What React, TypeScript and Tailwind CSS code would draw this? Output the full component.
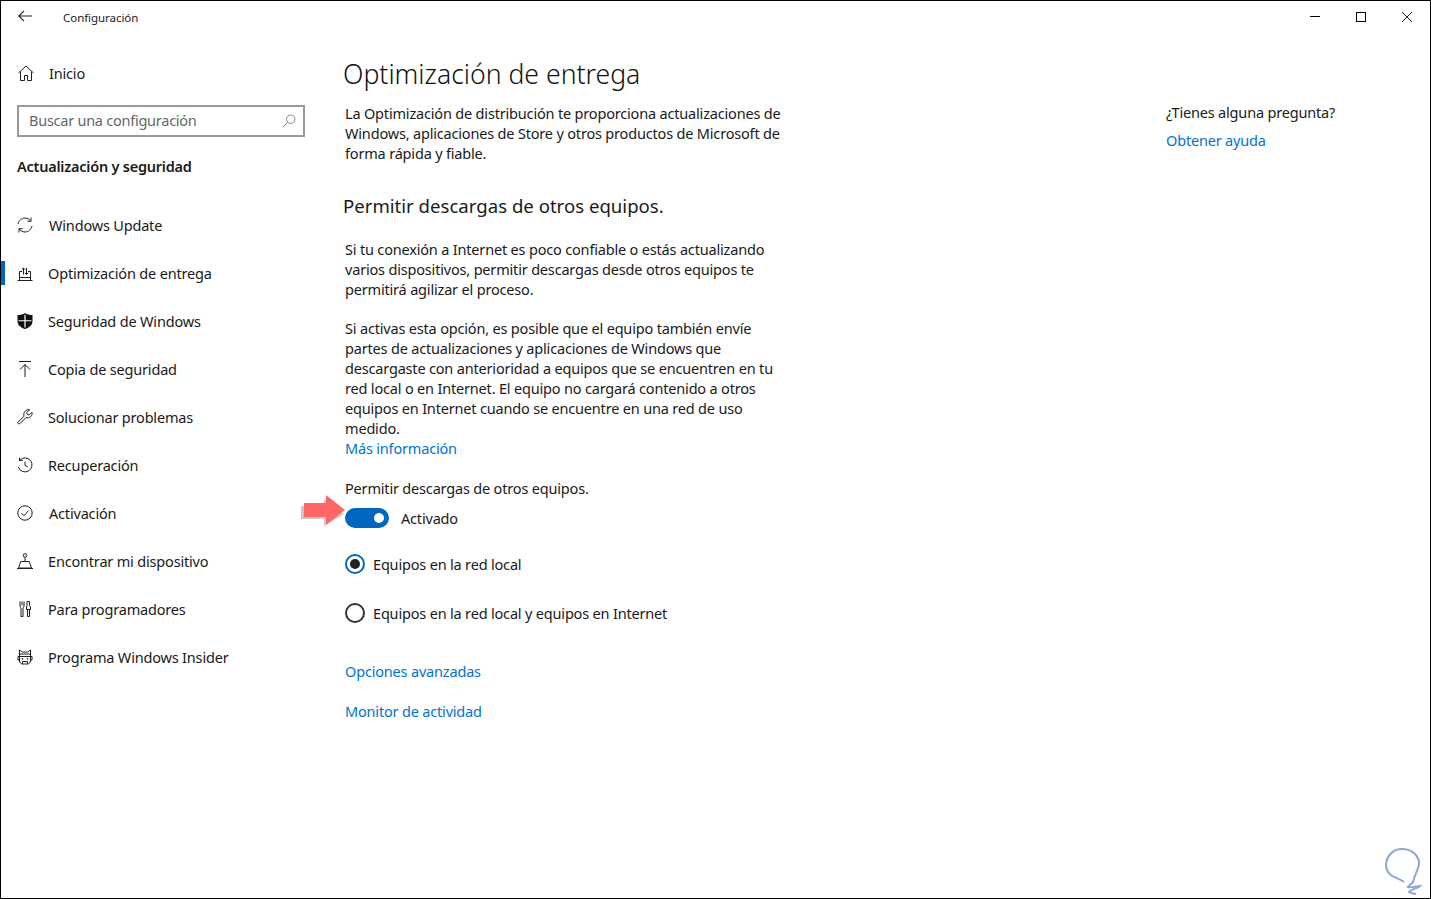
import type { ReactNode } from 'react';

const Icon = ({ children, className = '' }: { children: ReactNode; className?: string }) => (
  <svg viewBox="0 0 16 16" fill="none" stroke="#1f1f1f" strokeWidth="1" className={`w-4 h-4 shrink-0 ${className}`}>
    {children}
  </svg>
);

const navItems: { label: string; textGap: string; icon: ReactNode }[] = [
  {
    label: 'Windows Update',
    textGap: 'ml-[16px]',
    icon: (
      <>
        <path d="M1 7C1.800 3.600 4.600 1 8 1c2.300 0 4.300 1.100 5.500 2.900" />
        <path d="M14 .5v3.800h-3.600" />
        <path d="M15 9c-.8 3.400-3.600 6-7 6-2.300 0-4.300-1.100-5.500-2.900" />
        <path d="M2 15.500v-3.800h3.600" />
      </>
    ),
  },
  {
    label: 'Optimización de entrega',
    textGap: 'ml-[15px]',
    icon: (
      <>
        <path d="M.5 15.500h15" />
        <path d="M2.500 15V6.500h2.500M13.500 15V6.500h-2.500" />
        <path d="M6.500 9.500V3M4.800 4.700 6.500 3l1.700 1.700M9.500 3v6.500M7.800 7.800l1.700 1.700 1.700-1.700" />
        <path d="M2.500 12.500h11" />
      </>
    ),
  },
  {
    label: 'Seguridad de Windows',
    textGap: 'ml-[15px]',
    icon: (
      <path
        fillRule="evenodd"
        stroke="none"
        fill="#111"
        d="M8 0c2 1.500 4.500 2 7.500 2v6c0 4-3 6.500-7.500 8C3.500 14.500.5 12 .5 8V2C3.500 2 6 1.500 8 0zM7.400 1.800v5.400H1.500v1h5.900v6.300h1.200V8.200h5.900v-1H8.600V1.800z"
      />
    ),
  },
  {
    label: 'Copia de seguridad',
    textGap: 'ml-[15px]',
    icon: (
      <>
        <path d="M2 .5h12" />
        <path d="M8 17V3.500M3 8.500l5-5 5 5" />
      </>
    ),
  },
  {
    label: 'Solucionar problemas',
    textGap: 'ml-[15px]',
    icon: (
      <path d="M1 13.200 7 7.200C6.300 4.800 7.200 2.500 9.500 1.200c1-.5 2-.7 3-.5L9.800 3.500l.5 2 2 .5L15 3.300c.3 1.500 0 3-1.200 4.200-1.300 1.200-3 1.600-4.800 1l-5.800 6c-1 1-3.200-.3-2.200-1.300z" />
    ),
  },
  {
    label: 'Recuperación',
    textGap: 'ml-[15px]',
    icon: (
      <>
        <path d="M2.800 3.200A7 7 0 1 1 1.300 10" />
        <path d="M2.500.5v3h3.200" />
        <path d="M8 4.500V8.500l2.800 1.500" />
      </>
    ),
  },
  {
    label: 'Activación',
    textGap: 'ml-[16px]',
    icon: (
      <>
        <circle cx="8" cy="8" r="7.200" />
        <path d="m4.500 8.300 2.400 2.400 4.600-5" />
      </>
    ),
  },
  {
    label: 'Encontrar mi dispositivo',
    textGap: 'ml-[15px]',
    icon: (
      <>
        <circle cx="8" cy="2.500" r="1.800" />
        <path d="M8 4.500v4M3.800 8.500h8.400l2.300 6.500h-13z" />
        <path d="M0 15.500h16" />
      </>
    ),
  },
  {
    label: 'Para programadores',
    textGap: 'ml-[15px]',
    icon: (
      <>
        <path d="M3 .5v4.500c0 1 .5 1.500 1 1.800v8.700h2V6.800c.5-.3 1-.8 1-1.800V.5M5 .5v4" />
        <path d="M10 .5h2.500v4l1 1.500v2.500h-4V6l.5-1.500zM10.500 8.500v7h2v-7" />
      </>
    ),
  },
  {
    label: 'Programa Windows Insider',
    textGap: 'ml-[15px]',
    icon: (
      <>
        <path d="M2.500 5V1l3 2h5l3-2v4" />
        <path d="M2.500 5h11M1 7.500h14M2.500 5v7c0 1.500 1.500 3 3 3h5c1.500 0 3-1.500 3-3V5" />
        <path d="M1 7.500V11h1.500M15 7.500V11h-1.500M5.500 15v-2.500h5V15" />
        <circle cx="5.500" cy="9.800" r=".5" />
        <circle cx="10.500" cy="9.800" r=".5" />
      </>
    ),
  },
];

const Link = ({ children, className = '' }: { children: ReactNode; className?: string }) => (
  <a className={`block text-[#0073cf] h-5 leading-5 ${className}`}>{children}</a>
);

export default function App() {
  return (
    <div className="relative h-[899px] w-full border border-black bg-white text-[14.5px] tracking-[-0.18px] leading-5 text-[#1a1a1a] font-['Noto_Sans',sans-serif] overflow-hidden flex flex-col">
      <header className="flex h-[32px] shrink-0 items-center">
        <svg viewBox="0 0 14 12" fill="none" stroke="#222" strokeWidth="1.100" className="ml-[17px] w-[14px] h-[12px] -mt-[2px]">
          <path d="M14 6H1M6 .8 .8 6 6 11.200" />
        </svg>
        <span className="ml-[31px] mt-[2px] text-[11.5px] tracking-[-0.05px] text-[#222]">Configuración</span>
        <div className="ml-auto flex items-center gap-[36px] pr-[18px] -mt-[1px]">
          <span className="w-[10px] h-px bg-black" />
          <span className="w-[10px] h-[10px] border border-black" />
          <svg viewBox="0 0 10 10" stroke="#222" strokeWidth="1" className="w-[10px] h-[10px]">
            <path d="M0 0l10 10M10 0 0 10" />
          </svg>
        </div>
      </header>

      <div className="flex flex-1 min-h-0">
        <aside className="w-[344px] shrink-0">
          <div className="mt-[24px] flex h-[32px] items-center pl-[17px]">
            <svg viewBox="0 0 16 16" fill="none" stroke="#1f1f1f" className="w-4 h-4">
              <path d="M.5 8 8 1l7.500 7M2.500 6.500v9h4v-5h3v5h4v-9" />
            </svg>
            <span className="ml-[15px]">Inicio</span>
          </div>
          <div className="mt-[16px] ml-[16px] flex h-[32px] w-[288px] items-center justify-between border-2 border-[#999] pl-[10px] pr-[7px] tracking-[-0.25px] text-[#666]">
            <span className="-mt-[2px]">Buscar una configuración</span>
            <svg viewBox="0 0 16 16" fill="none" stroke="#777" className="w-[14px] h-[14px]">
              <circle cx="10" cy="6" r="4.800" />
              <path d="M6.500 9.500 1 15" />
            </svg>
          </div>
          <h2 className="mt-[19px] ml-[16px] h-5 font-semibold tracking-[-0.23px]">Actualización y seguridad</h2>
          <nav className="mt-[25px]">
            {navItems.map((item, i) => (
              <div key={item.label} className="relative flex h-[48px] items-center pl-[16px]">
                {i === 1 && <span className="absolute left-0 top-[12px] h-[24px] w-[4px] bg-[#0067c0]" />}
                <Icon>{item.icon}</Icon>
                <span className={item.textGap}>{item.label}</span>
              </div>
            ))}
          </nav>
        </aside>

        <main className="w-[821px] shrink-0 pt-[24px]">
          <h1 className="-ml-[2px] h-[34px] text-[26.600px] tracking-normal leading-[34px] font-light text-[#111]">Optimización de entrega</h1>
          <p className="mt-[12px]">
            La Optimización de distribución te proporciona actualizaciones de
            <br />
            Windows, aplicaciones de Store y otros productos de Microsoft de
            <br />
            forma rápida y fiable.
          </p>
          <h2 className="-ml-[2px] mt-[30px] h-[26px] text-[18.600px] tracking-normal leading-[26px]">Permitir descargas de otros equipos.</h2>
          <p className="mt-[20px]">
            Si tu conexión a Internet es poco confiable o estás actualizando
            <br />
            varios dispositivos, permitir descargas desde otros equipos te
            <br />
            permitirá agilizar el proceso.
          </p>
          <p className="mt-[19px]">
            Si activas esta opción, es posible que el equipo también envíe
            <br />
            partes de actualizaciones y aplicaciones de Windows que
            <br />
            descargaste con anterioridad a equipos que se encuentren en tu
            <br />
            red local o en Internet. El equipo no cargará contenido a otros
            <br />
            equipos en Internet cuando se encuentre en una red de uso
            <br />
            medido.
          </p>
          <Link>Más información</Link>
          <p className="mt-[20px]">Permitir descargas de otros equipos.</p>
          <div className="mt-[10px] flex h-5 items-center">
            <span className="flex h-5 w-11 items-center justify-end rounded-full bg-[#0067c0] pr-[5px]">
              <span className="h-[10px] w-[10px] rounded-full bg-white" />
            </span>
            <span className="ml-3">Activado</span>
          </div>
          <div className="mt-[26px] flex h-5 items-center">
            <span className="flex h-5 w-5 items-center justify-center rounded-full border-2 border-[#0067c0]">
              <span className="h-[10px] w-[10px] rounded-full bg-[#222]" />
            </span>
            <span className="ml-2">Equipos en la red local</span>
          </div>
          <div className="mt-[29px] flex h-5 items-center">
            <span className="h-5 w-5 rounded-full border-2 border-[#333]" />
            <span className="ml-2">Equipos en la red local y equipos en Internet</span>
          </div>
          <Link className="mt-[38px]">Opciones avanzadas</Link>
          <Link className="mt-[20px]">Monitor de actividad</Link>
        </main>

        <aside className="flex-1 pt-[69px]">
          <p>¿Tienes alguna pregunta?</p>
          <Link className="mt-2">Obtener ayuda</Link>
        </aside>
      </div>

      <svg viewBox="0 0 46 32" className="absolute left-[299px] top-[494px] h-[32px] w-[46px]">
        <path d="M1 11h23V4l20 15-20 12v-7H1z" fill="#c8c8c8" />
        <path d="M4 8h22V0l19 15-19 15v-8H4z" fill="#ff6666" />
      </svg>

      <svg viewBox="0 0 60 60" fill="none" stroke="#8ea6d8" strokeWidth="2" className="absolute left-[1370px] top-[838px] h-[60px] w-[60px]">
        <path d="M33 43C26 38 16 38 15 27 15 17 22 10 31 10c10 0 17 7 17 14 0 6-4 10-6 19l-5 5c4 1 8-1 12-1-3 3-9 3-11 6 2 1 5 2 7 2" />
      </svg>
    </div>
  );
}
